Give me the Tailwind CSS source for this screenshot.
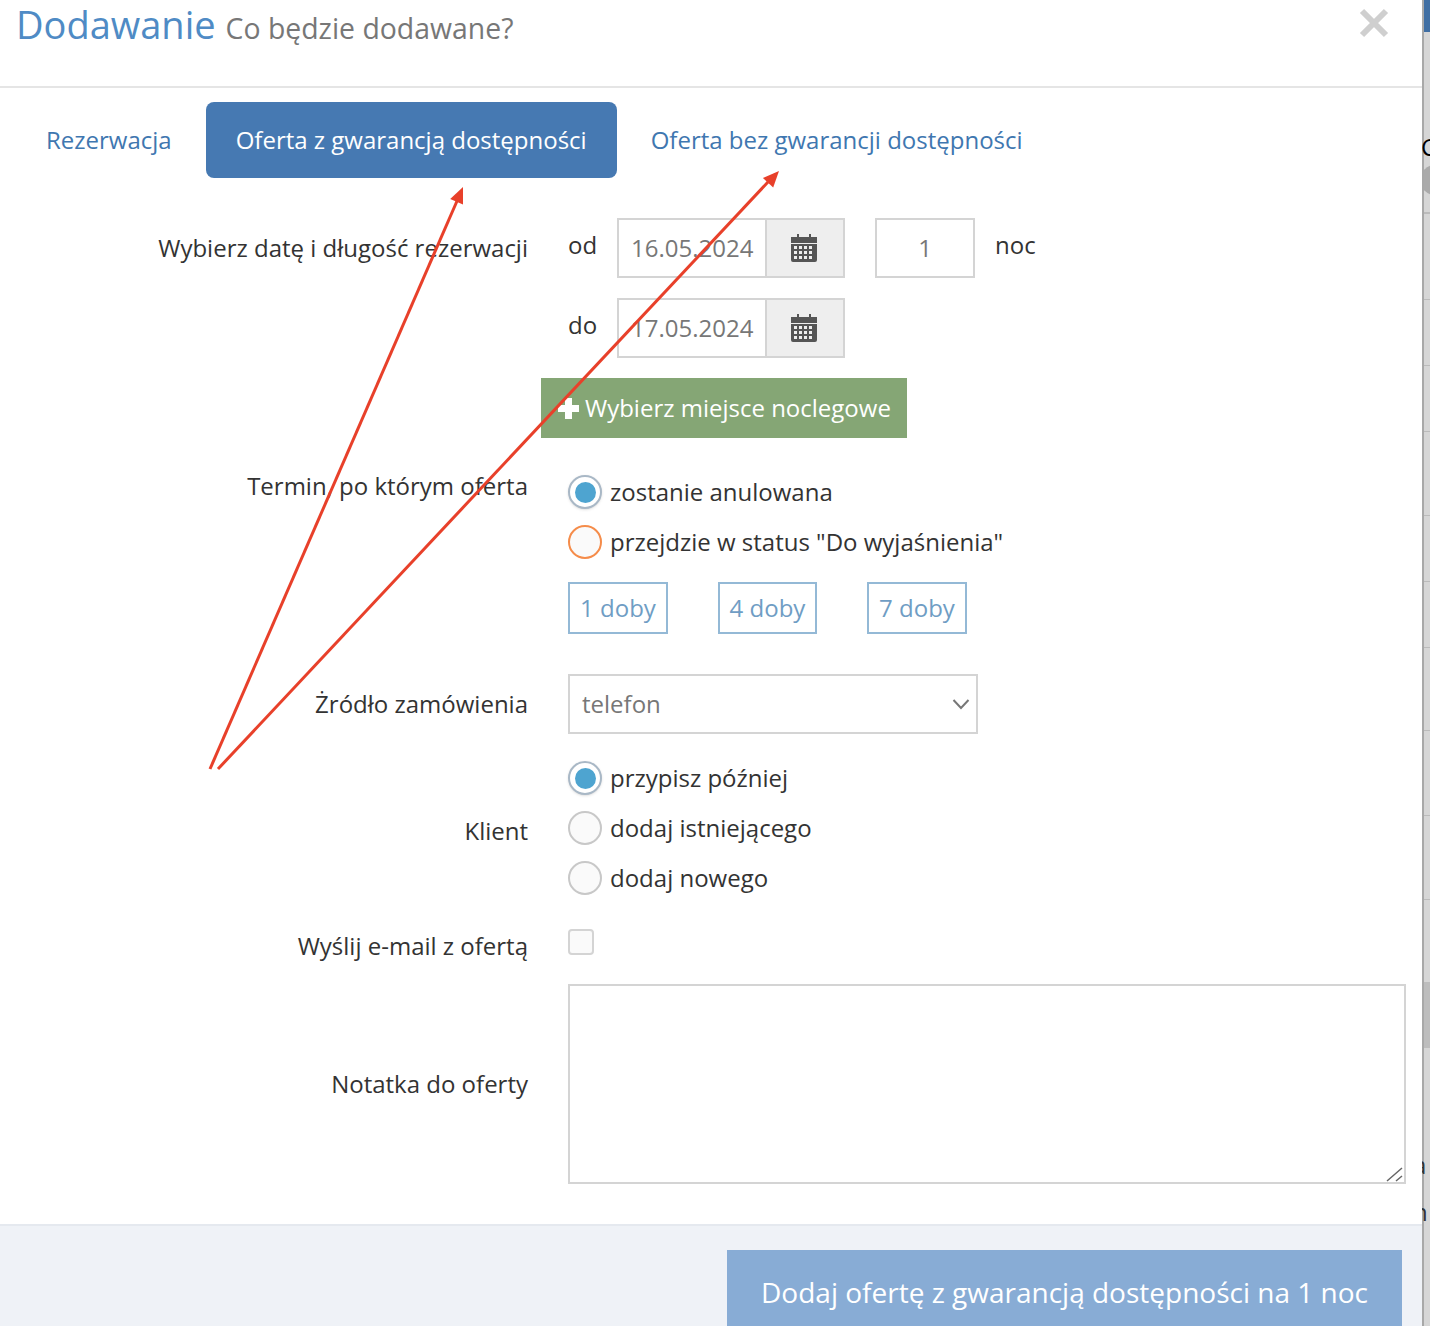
<!DOCTYPE html>
<html lang="pl">
<head>
<meta charset="UTF-8">
<title>Dodawanie</title>
<script src="https://cdn.jsdelivr.net/npm/@tailwindcss/browser@4"></script>
</head>
<body class="bg-white">
<div class="relative flex h-[1326px] w-[1430px] overflow-hidden font-['Open_Sans',sans-serif] text-[24px] text-[#333]">

  <!-- modal -->
  <div class="flex h-full w-[1422px] flex-col bg-white">
    <header class="flex h-[88px] shrink-0 items-start justify-between border-b-2 border-[#e5e5e5] pl-[16px] pr-[32px]">
      <h1 class="flex items-baseline gap-[10px] text-[38px] leading-[48px] text-[#4f8bc5]">Dodawanie <small class="text-[28.4px] text-[#777]">Co będzie dodawane?</small></h1>
      <svg class="mt-[7px]" width="32" height="32" viewBox="0 0 32 32"><path d="M4 4 L28 28 M28 4 L4 28" stroke="#cfcfcf" stroke-width="6"/></svg>
    </header>

    <nav class="mt-[14px] flex h-[76px] shrink-0 gap-[4px] pl-[16px] text-[#3f77b0]">
      <a class="flex items-center rounded-lg px-[30px]">Rezerwacja</a>
      <a class="flex items-center rounded-lg bg-[#4679b2] px-[30px] text-white">Oferta z gwarancją dostępności</a>
      <a class="flex items-center rounded-lg px-[30px]">Oferta bez gwarancji dostępności</a>
    </nav>

    <form class="flex flex-1 flex-col pt-[40px]">
      <!-- daty -->
      <div class="grid grid-cols-[528px_1fr] gap-x-[40px]">
        <label class="pt-[12px] text-right">Wybierz datę i długość rezerwacji</label>
        <div class="flex flex-col gap-[20px]">
          <div class="flex h-[60px] items-center">
            <span class="mt-[-6px] w-[49px]">od</span>
            <div class="flex h-full w-[228px] border-2 border-[#d4d4d4]">
              <input value="16.05.2024" class="w-[146px] bg-white pl-[12px] text-[#777] outline-none">
              <span class="flex flex-1 items-center justify-center border-l-2 border-[#d4d4d4] bg-[#eee] pr-[2px]">
                <svg width="26" height="28" viewBox="0 0 26 28" fill="#555"><path d="M6 0h2v3h10V0h2v3h6v6H0V3h6z"/><path fill-rule="evenodd" d="M0 10h26v16a2 2 0 0 1-2 2H2a2 2 0 0 1-2-2zM3 12v3h3v-3zm5 0v3h3v-3zm5 0v3h3v-3zm5 0v3h3v-3zM3 17v3h3v-3zm5 0v3h3v-3zm5 0v3h3v-3zm5 0v3h3v-3zM3 22v3h3v-3zm5 0v3h3v-3zm5 0v3h3v-3zm5 0v3h3v-3z"/></svg>
              </span>
            </div>
            <input value="1" class="ml-[30px] h-full w-[100px] border-2 border-[#d4d4d4] pb-[2px] text-center text-[#777] outline-none">
            <span class="ml-[20px] mt-[-6px]">noc</span>
          </div>
          <div class="flex h-[60px] items-center">
            <span class="mt-[-6px] w-[49px]">do</span>
            <div class="flex h-full w-[228px] border-2 border-[#d4d4d4]">
              <input value="17.05.2024" class="w-[146px] bg-white pl-[12px] text-[#777] outline-none">
              <span class="flex flex-1 items-center justify-center border-l-2 border-[#d4d4d4] bg-[#eee] pr-[2px]">
                <svg width="26" height="28" viewBox="0 0 26 28" fill="#555"><path d="M6 0h2v3h10V0h2v3h6v6H0V3h6z"/><path fill-rule="evenodd" d="M0 10h26v16a2 2 0 0 1-2 2H2a2 2 0 0 1-2-2zM3 12v3h3v-3zm5 0v3h3v-3zm5 0v3h3v-3zm5 0v3h3v-3zM3 17v3h3v-3zm5 0v3h3v-3zm5 0v3h3v-3zm5 0v3h3v-3zM3 22v3h3v-3zm5 0v3h3v-3zm5 0v3h3v-3zm5 0v3h3v-3z"/></svg>
              </span>
            </div>
          </div>
        </div>
      </div>

      <div class="ml-[541px] mt-[20px] flex h-[60px] w-[366px] items-center gap-[6px] bg-[#85a675] pl-[17px] text-white">
        <svg width="21" height="21" viewBox="0 0 21 21" fill="#fff"><path d="M7 0h7v7h7v7h-7v7H7v-7H0V7h7z"/></svg>
        Wybierz miejsce noclegowe
      </div>

      <!-- termin -->
      <div class="mt-[37px] grid grid-cols-[528px_1fr] gap-x-[40px]">
        <label class="mt-[-1px] text-right leading-[24px]">Termin, po którym oferta</label>
        <div class="flex flex-col gap-[16px]">
          <div class="flex h-[34px] items-center gap-[8px]">
            <span class="flex h-[34px] w-[34px] items-center justify-center rounded-full border-2 border-[#a9b8c6] bg-white shadow-sm"><span class="h-[21px] w-[21px] rounded-full bg-[#4ea4d0]"></span></span>
            zostanie anulowana
          </div>
          <div class="flex h-[34px] items-center gap-[8px]">
            <span class="h-[34px] w-[34px] rounded-full border-2 border-[#f58c4a] bg-[#fafafa]"></span>
            przejdzie w status "Do wyjaśnienia"
          </div>
          <div class="mt-[7px] flex gap-[50px] text-[#6f9dc4]">
            <span class="flex h-[52px] w-[100px] items-center justify-center border-2 border-[#94b9d6]">1 doby</span>
            <span class="flex h-[52px] w-[99px] items-center justify-center border-2 border-[#94b9d6]">4 doby</span>
            <span class="flex h-[52px] w-[100px] items-center justify-center border-2 border-[#94b9d6]">7 doby</span>
          </div>
        </div>
      </div>

      <!-- zrodlo -->
      <div class="mt-[40px] grid grid-cols-[528px_1fr] items-center gap-x-[40px]">
        <label class="text-right">Żródło zamówienia</label>
        <div class="relative h-[60px] w-[410px]">
          <select class="h-full w-full appearance-none border-2 border-[#d4d4d4] bg-white pl-[12px] text-[#777] outline-none"><option>telefon</option></select>
          <svg class="absolute right-[8px] top-[24px]" width="18" height="12" viewBox="0 0 18 12" fill="none"><path d="M1.5 2 L9 10 L16.5 2" stroke="#777" stroke-width="2"/></svg>
        </div>
      </div>

      <!-- klient -->
      <div class="mt-[27px] grid grid-cols-[528px_1fr] items-center gap-x-[40px]">
        <label class="mt-[6px] text-right">Klient</label>
        <div class="flex flex-col gap-[16px]">
          <div class="flex h-[34px] items-center gap-[8px]">
            <span class="flex h-[34px] w-[34px] items-center justify-center rounded-full border-2 border-[#a9b8c6] bg-white shadow-sm"><span class="h-[21px] w-[21px] rounded-full bg-[#4ea4d0]"></span></span>
            przypisz później
          </div>
          <div class="flex h-[34px] items-center gap-[8px]">
            <span class="h-[34px] w-[34px] rounded-full border-2 border-[#c8c8c8] bg-[#fafafa]"></span>
            dodaj istniejącego
          </div>
          <div class="flex h-[34px] items-center gap-[8px]">
            <span class="h-[34px] w-[34px] rounded-full border-2 border-[#c8c8c8] bg-[#fafafa]"></span>
            dodaj nowego
          </div>
        </div>
      </div>

      <!-- email -->
      <div class="mt-[25px] grid h-[26px] grid-cols-[528px_1fr] items-center gap-x-[40px]">
        <label class="mt-[8px] text-right">Wyślij e-mail z ofertą</label>
        <span class="h-[26px] w-[26px] rounded-[4px] border-2 border-[#d4d4d4] bg-[#fafafa]"></span>
      </div>

      <!-- notatka -->
      <div class="mt-[29px] grid grid-cols-[528px_1fr] items-center gap-x-[40px] pt-[9px]">
        <label class="text-right">Notatka do oferty</label>
        <div class="relative h-[200px] w-[838px]">
          <textarea class="block h-full w-full resize-none border-2 border-[#d4d4d4] bg-white outline-none"></textarea>
          <svg class="absolute bottom-[2px] right-[2px]" width="18" height="16" viewBox="0 0 18 16" fill="none"><path d="M1 15 L16 2 M10 15 L16 10" stroke="#666" stroke-width="1.5"/></svg>
        </div>
      </div>

      <footer class="mt-[40px] flex flex-1 justify-end border-t-2 border-[#e5e9ef] bg-[#eff2f7] pr-[20px] pt-[24px]">
        <button type="button" class="h-[90px] w-[675px] bg-[#88acd5] pb-[6px] text-[28px] text-white">Dodaj ofertę z gwarancją dostępności na 1 noc</button>
      </footer>
    </form>
  </div>

  <!-- what shows of the page behind the modal -->
  <div class="relative h-full w-[8px] overflow-hidden bg-[#d6d6d6] text-black">
    <div class="h-[32px] bg-[#3f6ea3]"></div>
    <div class="absolute left-[-2px] top-[165px] h-[30px] w-[30px] rounded-full bg-[#aaa]"></div>
    <div class="absolute left-0 top-[982px] h-[66px] w-full bg-[#bdbdbd]"></div>
    <div class="absolute left-0 top-[212px] h-[2px] w-full bg-[#bbb]"></div>
    <div class="absolute left-0 top-[299px] h-[1px] w-full bg-[#bbb]"></div>
    <div class="absolute left-0 top-[365px] h-[1px] w-full bg-[#bbb]"></div>
    <div class="absolute left-0 top-[431px] h-[1px] w-full bg-[#bbb]"></div>
    <div class="absolute left-0 top-[515px] h-[1px] w-full bg-[#bbb]"></div>
    <div class="absolute left-0 top-[581px] h-[1px] w-full bg-[#bbb]"></div>
    <div class="absolute left-0 top-[647px] h-[1px] w-full bg-[#bbb]"></div>
    <div class="absolute left-0 top-[730px] h-[1px] w-full bg-[#bbb]"></div>
    <div class="absolute left-0 top-[815px] h-[1px] w-full bg-[#bbb]"></div>
    <div class="absolute left-0 top-[899px] h-[1px] w-full bg-[#bbb]"></div>
    <div class="absolute left-0 top-0 h-full w-[2px] bg-[#a8a8a8]"></div>
    <div class="absolute left-[-1px] top-[129px] text-[24px]">C</div>
    <div class="absolute left-[-9px] top-[1147px] text-[24px] text-[#333]">a</div>
    <div class="absolute left-[-9px] top-[1194px] text-[24px] text-[#333]">n</div>
  </div>

  <!-- annotation arrows drawn over the screenshot -->
  <svg class="pointer-events-none absolute left-0 top-0" width="1430" height="1326" viewBox="0 0 1430 1326">
    <path d="M210 769 L457 201" stroke="#e8402a" stroke-width="3" fill="none"/>
    <path d="M218 769 L768 182" stroke="#e8402a" stroke-width="3" fill="none"/>
    <polygon points="463,187 463,204.5 450.2,198.9" fill="#e8402a"/>
    <polygon points="779,171 773.2,187.5 762.9,177.9" fill="#e8402a"/>
  </svg>
</div>
</body>
</html>
